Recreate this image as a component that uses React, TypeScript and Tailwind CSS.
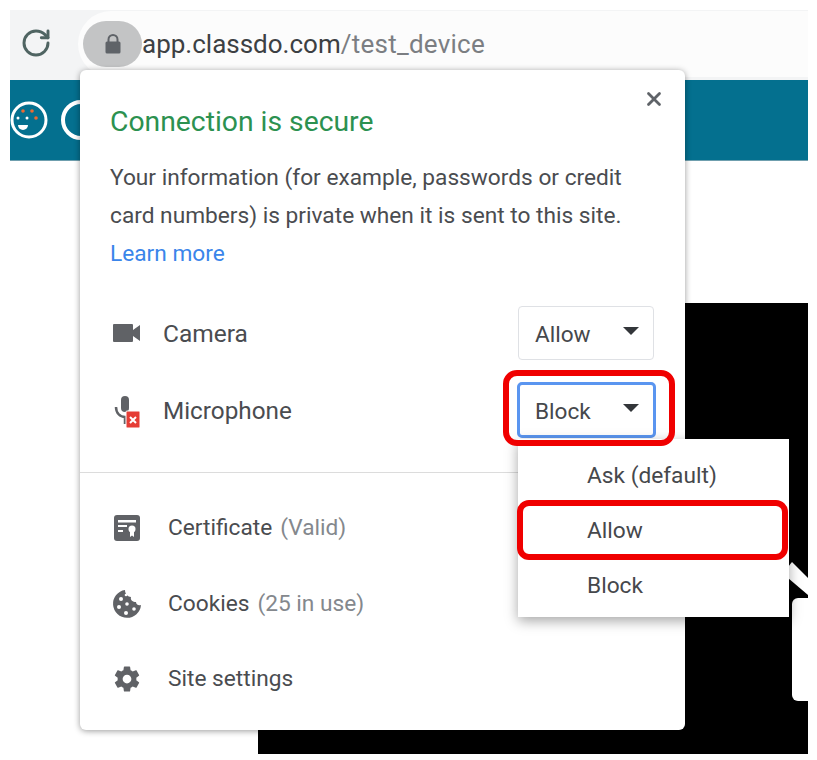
import React from "react";
import { RotateCw, X } from "lucide-react";

const font = { fontFamily: "Roboto, sans-serif" };

function Row({ icon, label, note }: { icon: React.ReactNode; label: string; note?: string }) {
  return (
    <div className="flex items-center h-[76px]">
      <div className="w-[30px] flex justify-center ml-[32px]">{icon}</div>
      <span className="ml-[26px] text-[22.7px] text-[#4a4c50]">{label}</span>
      {note && <span className="ml-[8px] text-[22.7px] text-[#84888d]">{note}</span>}
    </div>
  );
}

function Select({ value, focus }: { value: string; focus?: boolean }) {
  return (
    <div
      className={
        focus
          ? "w-[139px] h-[56px] rounded-[5px] border-[3px] border-[#5a95f0] flex items-center justify-between pl-[15px] pr-[14px] bg-white"
          : "w-[136px] h-[54px] rounded-[4px] border border-[#dfe1e5] flex items-center justify-between pl-[16px] pr-[14px] bg-white"
      }
    >
      <span className="text-[22.6px] text-[#46484c] pt-[4px]">{value}</span>
      <svg width="16" height="8" viewBox="0 0 16 8" className="mb-[5px]"><path d="M0 0h16L8 8z" fill="#33363a" /></svg>
    </div>
  );
}

export default function App() {
  return (
    <div className="relative w-[817px] h-[760px] bg-white overflow-hidden pt-[10px] pl-[10px] pr-[9px]" style={font}>
      <div className="h-[70px] bg-[#f3f4f5] flex items-center">
        <RotateCw className="ml-[10px] mt-[-4px] w-[32px] h-[32px] text-[#4f6462]" strokeWidth={2.2} />
        <div className="ml-[26px] h-[66px] flex-1 bg-[#fcfcfc] rounded-l-[33px] flex items-center pl-[5px] mt-[-2px]">
          <div className="w-[59px] h-[46px] rounded-[23px] bg-[#c3c4c5] flex items-center justify-center">
            <svg width="16" height="20" viewBox="0 0 16 20">
              <path d="M3.500 8V5.500a4.500 4.500 0 0 1 9 0V8" fill="none" stroke="#5f6368" strokeWidth="2" />
              <rect x="0.500" y="7.500" width="15" height="12" rx="1.500" fill="#5f6368" />
            </svg>
          </div>
          <span className="text-[26px] text-[#3c4043]">app.classdo.com<span className="text-[#7b7e82] tracking-[0.25px]">/test_device</span></span>
        </div>
      </div>

      <div className="h-[81px] bg-[#04708f] flex items-center gap-[13px] border-b border-[#6f9fae]">
        <svg width="38" height="38" viewBox="0 0 38 38">
          <circle cx="19" cy="19" r="17" fill="none" stroke="#fff" strokeWidth="3" />
          <circle cx="13" cy="10" r="1.800" fill="#ee6a30" />
          <circle cx="22" cy="10" r="1.800" fill="#ee6a30" />
          <circle cx="26" cy="17" r="1.800" fill="#ee6a30" />
          <circle cx="8" cy="17" r="1.500" fill="#fff" />
          <circle cx="17" cy="17" r="1.500" fill="#fff" />
          <path d="M8 24h10a5 5 0 0 1-10 0z" fill="#fff" />
        </svg>
        <div className="w-[40px] h-[40px] rounded-full border-[4px] border-white" />
      </div>

      <div className="flex justify-end mt-[142px]">
        <div className="w-[550px] h-[451px] bg-black relative">
          <div className="absolute left-[534px] top-[295px] w-[16px] h-[103px] bg-white rounded-l-[6px]" />
          <svg className="absolute left-[527px] top-[258px]" width="23" height="36" viewBox="0 0 23 36">
            <path d="M7 1l16 16v17L3 17V6z" fill="#fff" />
          </svg>
        </div>
      </div>

      <div className="absolute left-[80px] top-[70px] w-[605px] h-[660px] bg-white rounded-[6px] shadow-[0_1px_6px_rgba(0,0,0,0.4)]">
        <X className="absolute right-[20px] top-[18px] w-[22px] h-[22px] text-[#5f6368]" strokeWidth={3} />
        <div className="pl-[30px] pr-[40px] pt-[34px]">
          <div className="text-[28.3px] leading-[36px] text-[#2c9150]">Connection is secure</div>
          <p className="mt-[19px] text-[22.7px] leading-[38px] text-[#4a4c50]">
            Your information (for example, passwords or credit card numbers) is private when it is sent to this site.
            <br />
            <span className="text-[#3a85ea]">Learn more</span>
          </p>
        </div>
        <div className="mt-[33px] pl-[32px] pr-[31px] flex items-center justify-between">
          <div className="flex items-center">
            <div className="w-[28px] flex justify-center">
              <svg width="27" height="18" viewBox="0 0 27 18"><path d="M1 0h18a1 1 0 0 1 1 1v5l7-5v16l-7-5v5a1 1 0 0 1-1 1H1a1 1 0 0 1-1-1V1a1 1 0 0 1 1-1z" fill="#606266" /></svg>
            </div>
            <span className="ml-[23px] pt-[2px] text-[24.500px] text-[#4a4c50]">Camera</span>
          </div>
          <Select value="Allow" />
        </div>
        <div className="mt-[22px] pl-[32px] pr-[29px] flex items-center justify-between">
          <div className="flex items-center">
            <div className="w-[28px] flex justify-center pt-[4px]">
              <svg width="28" height="32" viewBox="0 0 28 32">
                <rect x="9" y="0" width="8" height="16" rx="4" fill="#606266" />
                <path d="M4 11c0 6 4 10 9 10v7" fill="none" stroke="#606266" strokeWidth="2.500" />
                <rect x="14" y="15" width="14" height="17" rx="1" fill="#e53d35" stroke="#fff" />
                <path d="M18 21l6 6m0-6l-6 6" stroke="#fff" strokeWidth="2" />
              </svg>
            </div>
            <span className="ml-[23px] pt-[3px] text-[24.300px] text-[#4a4c50]">Microphone</span>
          </div>
          <Select value="Block" focus />
        </div>
        <div className="mt-[34px] border-t border-[#dcdcdc]" />
        <div className="mt-[17px]">
          <Row
            label="Certificate"
            note="(Valid)"
            icon={
              <svg width="26" height="26" viewBox="0 0 26 26">
                <rect width="26" height="26" rx="3" fill="#606266" />
                <rect x="4" y="5" width="18" height="2.500" fill="#fff" />
                <rect x="4" y="10" width="9" height="2" fill="#fff" />
                <rect x="4" y="15" width="5" height="2" fill="#fff" />
                <circle cx="18" cy="14" r="3.500" fill="#fff" />
                <path d="M16 17h4v5l-2-1.500-2 1.500z" fill="#fff" />
              </svg>
            }
          />
          <Row
            label="Cookies"
            note="(25 in use)"
            icon={
              <svg width="30" height="30" viewBox="0 0 30 30">
                <path d="M13 1a14 14 0 1 0 16 15c-3 1-5-1-5-3-3 0-6-2-5-5-3 0-6-3-6-7z" fill="#606266" />
                <circle cx="9" cy="10" r="2" fill="#fff" />
                <circle cx="14" cy="6" r="1.300" fill="#fff" />
                <circle cx="7" cy="18" r="2" fill="#fff" />
                <circle cx="15" cy="15" r="1.800" fill="#fff" />
                <circle cx="14" cy="24" r="2" fill="#fff" />
                <circle cx="22" cy="20" r="1.800" fill="#fff" />
              </svg>
            }
          />
          <div className="mt-[-1px]">
            <Row
              label="Site settings"
              icon={
                <svg width="34" height="34" viewBox="0 0 24 24">
                  <path
                    fill="#606266"
                    d="M19.430 12.980c.04-.32.07-.64.07-.98s-.03-.66-.07-.98l2.110-1.650c.19-.15.24-.42.12-.64l-2-3.460c-.12-.22-.39-.3-.61-.22l-2.490 1c-.52-.4-1.080-.73-1.690-.98l-.38-2.650A.488.488 0 0 0 14 2h-4c-.25 0-.46.18-.49.42l-.38 2.650c-.61.25-1.170.59-1.690.98l-2.490-1c-.23-.09-.49 0-.61.22l-2 3.460c-.13.22-.07.49.12.64l2.110 1.650c-.04.32-.07.65-.07.980s.03.66.07.98l-2.110 1.650c-.19.15-.24.42-.12.64l2 3.460c.12.22.39.3.61.22l2.490-1c.52.4 1.080.73 1.690.98l.38 2.650c.03.24.24.42.49.42h4c.25 0 .46-.18.49-.42l.38-2.650c.61-.25 1.170-.59 1.690-.98l2.490 1c.23.09.49 0 .61-.22l2-3.460c.12-.22.07-.49-.12-.64l-2.110-1.650zM12 15.500c-1.930 0-3.500-1.570-3.500-3.500s1.570-3.500 3.500-3.500 3.500 1.570 3.500 3.500-1.570 3.500-3.500 3.500z"
                  />
                </svg>
              }
            />
          </div>
        </div>
      </div>

      <div className="absolute left-[518px] top-[439px] w-[271px] h-[178px] bg-white shadow-[0_4px_12px_rgba(0,0,0,0.35)] pl-[69px] pt-[10px] text-[22.700px] text-[#46484c]">
        <div className="h-[55px] flex items-center">Ask (default)</div>
        <div className="h-[55px] flex items-center">Allow</div>
        <div className="h-[55px] flex items-center">Block</div>
      </div>

      <div className="absolute left-[503px] top-[370px] w-[172px] h-[76px] rounded-[14px] border-[6px] border-[#f00000]" />
      <div className="absolute left-[517px] top-[500px] w-[271px] h-[60px] rounded-[12px] border-[6px] border-[#f00000]" />
    </div>
  );
}
